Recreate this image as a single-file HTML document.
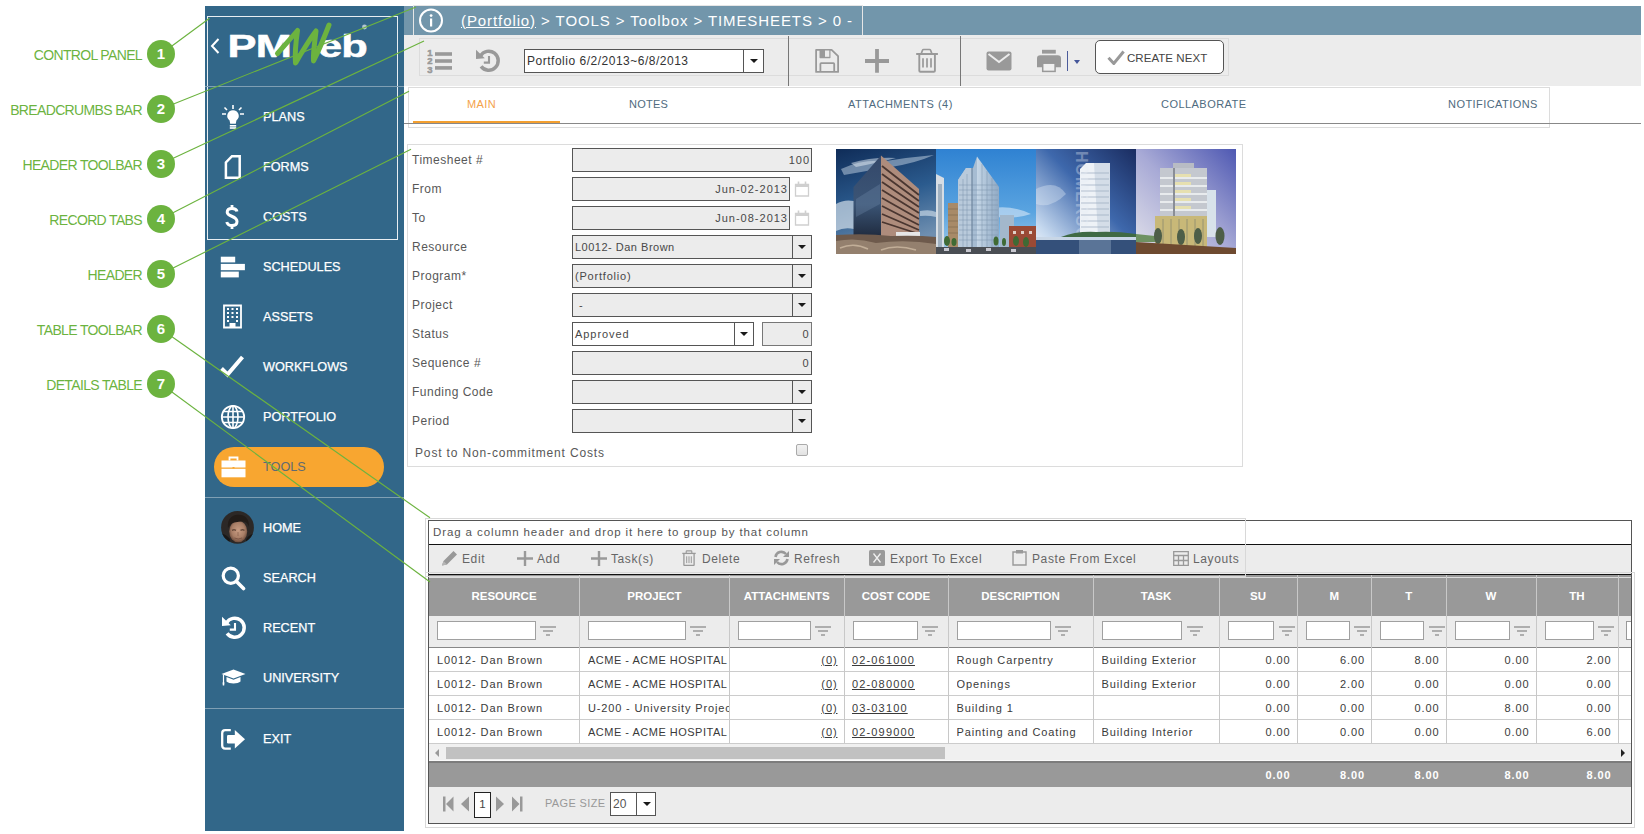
<!DOCTYPE html>
<html><head><meta charset="utf-8">
<style>
*{margin:0;padding:0;box-sizing:border-box}
html,body{width:1644px;height:834px;overflow:hidden;background:#fff;font-family:"Liberation Sans",sans-serif;position:relative}
.a{position:absolute}
.ann{position:absolute;color:#6cb33f;font-size:14px;letter-spacing:-0.65px;text-align:right;white-space:nowrap}
.num{position:absolute;width:28px;height:28px;border-radius:50%;background:#6cb33f;color:#fff;font-size:15px;font-weight:bold;text-align:center;line-height:28px}
#sb{position:absolute;left:205px;top:6px;width:199px;height:825px;background:#326789}
.mi{position:absolute;left:58px;color:#fff;font-size:12.7px;white-space:nowrap;-webkit-text-stroke:0.25px #fff;padding-top:0.5px}
.ic{position:absolute}
.hr{position:absolute;left:0;width:199px;height:1px;background:#7f9fb4}
.lbl{position:absolute;left:412px;font-size:12px;color:#585858;letter-spacing:0.5px;white-space:nowrap}
.fld{position:absolute;left:572px;height:24px;border:1px solid #555;background:#ececec;font-size:11px;color:#484848;letter-spacing:0.5px;white-space:nowrap;line-height:22px}
.dd{position:absolute;right:0;top:0;width:19.5px;height:22px;border-left:1px solid #555}
.dd:after{content:"";position:absolute;left:5.5px;top:9px;border-left:4px solid transparent;border-right:4px solid transparent;border-top:4.5px solid #1a1a1a}
.th{position:absolute;top:577px;height:39px;color:#fff;font-weight:bold;font-size:11.5px;text-align:center;line-height:39px;white-space:nowrap}
.tbt{top:552px;font-size:12px;color:#666;letter-spacing:0.6px;white-space:nowrap}
.td{position:absolute;font-size:11px;color:#3a3a3a;white-space:nowrap;letter-spacing:0.9px;line-height:24px;height:24px;overflow:hidden;padding-top:1px}
</style></head><body>

<!-- annotations -->
<div class="ann" style="right:1502px;top:47px">CONTROL PANEL</div>
<div class="ann" style="right:1502px;top:102px">BREADCRUMBS BAR</div>
<div class="ann" style="right:1502px;top:157px">HEADER TOOLBAR</div>
<div class="ann" style="right:1502px;top:212px">RECORD TABS</div>
<div class="ann" style="right:1502px;top:267px">HEADER</div>
<div class="ann" style="right:1502px;top:322px">TABLE TOOLBAR</div>
<div class="ann" style="right:1502px;top:377px">DETAILS TABLE</div>
<div class="num" style="left:147px;top:40px">1</div>
<div class="num" style="left:147px;top:95px">2</div>
<div class="num" style="left:147px;top:150px">3</div>
<div class="num" style="left:147px;top:205px">4</div>
<div class="num" style="left:147px;top:260px">5</div>
<div class="num" style="left:147px;top:315px">6</div>
<div class="num" style="left:147px;top:370px">7</div>

<!-- sidebar -->
<div id="sb">
 <div class="a" style="left:2px;top:10px;width:191px;height:224px;border:1px solid #e8eef2"></div>
 <svg class="a" style="left:0;top:0" width="199" height="80" viewBox="0 0 199 80">
  <path d="M13.5 33 L7 40 L13.5 47" stroke="#fff" stroke-width="2" fill="none"/>
  <text x="0" y="0" transform="translate(22.5 50.8) scale(1.4 1)" font-family="Liberation Sans" font-weight="bold" font-size="31" fill="#fff" stroke="#fff" stroke-width="0.5" letter-spacing="-0.5">PM</text>
  <text x="0" y="0" transform="translate(113 50.8) scale(1.4 1)" font-family="Liberation Sans" font-weight="bold" font-size="31" fill="#fff" stroke="#fff" stroke-width="0.5" letter-spacing="-0.6">eb</text>
  <path d="M72.5 47.5 C79 40 87 31 92.5 24.5 C91 35 89.5 46 90.5 57 C97 46 104 34 111 25 C110 35 108 45 108.5 55 C114 44 119 32 124 19" stroke="#6cb33f" stroke-width="5" fill="none" stroke-linecap="round" stroke-linejoin="round"/><circle cx="159.5" cy="21" r="2.4" fill="#b5c6d2"/>
  
 </svg>
 <div class="hr" style="top:80px"></div>
 <!-- plans bulb -->
 <svg class="ic" style="left:16px;top:99px" width="24" height="26" viewBox="0 0 24 26">
  <path d="M12 0v4M1 9h4M19 9h4M3.5 2.5l2.5 2.5M20.5 2.5l-2.5 2.5" stroke="#fff" stroke-width="1.6"/>
  <path d="M12 5.2a5.7 5.7 0 0 0-3.4 10.3l0.6 3.3h5.6l0.6-3.3A5.7 5.7 0 0 0 12 5.2z" fill="#fff"/>
  <rect x="8.8" y="20" width="6.4" height="1.6" fill="#fff"/><rect x="8.8" y="22.2" width="6.4" height="1.6" fill="#fff"/>
 </svg>
 <div class="mi" style="top:103px">PLANS</div>
 <!-- forms -->
 <svg class="ic" style="left:19px;top:149px" width="19" height="25" viewBox="0 0 19 25">
  <path d="M8 1.2H15.7V22.8H1.9V7.5Z" stroke="#fff" stroke-width="2.5" fill="none" stroke-linejoin="miter"/>
 </svg>
 <div class="mi" style="top:153px">FORMS</div>
 <!-- costs -->
 <svg class="ic" style="left:20px;top:198px" width="14" height="26" viewBox="0 0 14 26">
  <path d="M12 7.5C11.5 5.5 9.5 4.5 7 4.5C4 4.5 2.2 6 2.2 8.2C2.2 13 12 11.5 12 17.5C12 20 10 21.5 7 21.5C4.2 21.5 2.3 20.3 1.8 18" stroke="#fff" stroke-width="3" fill="none"/>
  <path d="M7 1v3.5M7 21.5V25" stroke="#fff" stroke-width="2.8"/>
 </svg>
 <div class="mi" style="top:203px">COSTS</div>
 <!-- schedules -->
 <svg class="ic" style="left:15px;top:250px" width="26" height="22" viewBox="0 0 26 22">
  <rect x="0.8" y="0.7" width="14.4" height="5.7" fill="#fff"/>
  <rect x="0.8" y="7.9" width="24.1" height="6.3" fill="#fff"/>
  <rect x="0.8" y="15.6" width="18" height="5.8" fill="#fff"/>
 </svg>
 <div class="mi" style="top:253px">SCHEDULES</div>
 <!-- assets -->
 <svg class="ic" style="left:17px;top:298px" width="21" height="25" viewBox="0 0 21 25">
  <path d="M2 1.5H19V23.5H2Z" stroke="#fff" stroke-width="1.8" fill="none"/>
  <g fill="#fff">
   <rect x="5" y="4" width="2" height="2"/><rect x="9.5" y="4" width="2" height="2"/><rect x="14" y="4" width="2" height="2"/>
   <rect x="5" y="8" width="2" height="2"/><rect x="9.5" y="8" width="2" height="2"/><rect x="14" y="8" width="2" height="2"/>
   <rect x="5" y="12" width="2" height="2"/><rect x="9.5" y="12" width="2" height="2"/><rect x="14" y="12" width="2" height="2"/>
   <rect x="5" y="16" width="2" height="2"/><rect x="14" y="16" width="2" height="2"/>
   <rect x="7.5" y="19" width="6" height="4.5"/>
  </g>
 </svg>
 <div class="mi" style="top:303px">ASSETS</div>
 <!-- workflows -->
 <svg class="ic" style="left:15px;top:349px" width="25" height="23" viewBox="0 0 25 23">
  <path d="M1.5 13.5L7.5 19.5L22.5 2" stroke="#fff" stroke-width="4" fill="none"/>
 </svg>
 <div class="mi" style="top:353px">WORKFLOWS</div>
 <!-- portfolio globe -->
 <svg class="ic" style="left:15px;top:398px" width="26" height="26" viewBox="0 0 26 26">
  <circle cx="13" cy="13" r="11.2" stroke="#fff" stroke-width="1.8" fill="none"/>
  <ellipse cx="13" cy="13" rx="5" ry="11.2" stroke="#fff" stroke-width="1.6" fill="none"/>
  <path d="M13 1.8V24.2M2 13H24M3.5 7.5H22.5M3.5 18.5H22.5" stroke="#fff" stroke-width="1.6"/>
 </svg>
 <div class="mi" style="top:403px">PORTFOLIO</div>
 <!-- tools pill -->
 <div class="a" style="left:9px;top:441px;width:170px;height:40px;border-radius:20px;background:#f8a630"></div>
 <svg class="ic" style="left:16px;top:450px" width="25" height="22" viewBox="0 0 25 22">
  <path d="M8.5 4.5V1.5H16.5V4.5" stroke="#fff" stroke-width="1.8" fill="none"/>
  <rect x="0.5" y="4.5" width="24" height="7" fill="#fff"/>
  <rect x="0.5" y="12.8" width="24" height="8.5" fill="#fff"/>
  <rect x="11.5" y="11" width="2" height="1.5" fill="#f8a630"/>
 </svg>
 <div class="mi" style="top:453px;color:#5f6a73;-webkit-text-stroke:0">TOOLS</div>
 <div class="hr" style="top:491px"></div>
 <!-- home avatar -->
 <svg class="ic" style="left:16px;top:505px" width="34" height="34" viewBox="0 0 34 34">
  <defs><clipPath id="avc"><circle cx="16.5" cy="16.4" r="16.4"/></clipPath>
  <radialGradient id="fg" cx="0.5" cy="0.45" r="0.6"><stop offset="0" stop-color="#c89c82"/><stop offset="0.6" stop-color="#a87e66"/><stop offset="1" stop-color="#5e4032"/></radialGradient></defs>
  <g clip-path="url(#avc)">
   <rect width="34" height="34" fill="#2c2826"/>
   <path d="M0 22Q6 24 9 28L8 34H0Z M34 22Q27 24 25 29L26 34H34Z" fill="#191716"/>
   <ellipse cx="17.2" cy="20.5" rx="9" ry="10.8" fill="url(#fg)"/>
   <path d="M7 17C6 9 10 4 17 3.8C24 3.6 28.5 8 28 16C27 12.5 25 10.5 21 10.5C17 10.8 12 11 9.5 13.5C8.5 14.5 7.8 15.8 7 17Z" fill="#221c18"/>
   <path d="M11 19.2Q13 18.2 15 19.2M19.5 19.2Q21.5 18.2 23.5 19.2" stroke="#4a3226" stroke-width="1.1" fill="none"/>
   <path d="M17 21V25" stroke="#8d6652" stroke-width="0.8"/>
   <path d="M13.5 27Q17.2 29 21 27" stroke="#7a5444" stroke-width="0.9" fill="none"/>
  </g>
 </svg>
 <div class="mi" style="top:514px">HOME</div>
 <!-- search -->
 <svg class="ic" style="left:16px;top:560px" width="25" height="25" viewBox="0 0 25 25">
  <circle cx="9.8" cy="9.8" r="7.6" stroke="#fff" stroke-width="3.2" fill="none"/>
  <path d="M15.5 15.5L22.5 22.5" stroke="#fff" stroke-width="3.6" stroke-linecap="round"/>
 </svg>
 <div class="mi" style="top:564px">SEARCH</div>
 <!-- recent -->
 <svg class="ic" style="left:16px;top:609px" width="26" height="26" viewBox="0 0 26 26">
  <path d="M5.47 7.95A9.5 9.5 0 1 1 6.05 18.34" stroke="#fff" stroke-width="3.5" fill="none"/>
  <path d="M1 1.7V10.9L9.8 10.2Z" fill="#fff"/>
  <path d="M14 8.1V15.6M8.8 14.6H15" stroke="#fff" stroke-width="2.1" fill="none"/>
 </svg>
 <div class="mi" style="top:614px">RECENT</div>
 <!-- university -->
 <svg class="ic" style="left:16px;top:663px" width="25" height="18" viewBox="0 0 25 18">
  <path d="M12.5 0.5L24.5 5L12.5 9.5L0.5 5Z" fill="#fff"/>
  <path d="M5.5 8V12.5C8 15 17 15 19.5 12.5V8L12.5 10.8Z" fill="#fff"/>
  <path d="M2.5 5.5V14" stroke="#fff" stroke-width="1.2"/>
  <path d="M1.5 13.5H3.5L3.2 16.5H1.8Z" fill="#fff"/>
 </svg>
 <div class="mi" style="top:664px">UNIVERSITY</div>
 <div class="hr" style="top:702px"></div>
 <!-- exit -->
 <svg class="ic" style="left:16px;top:723px" width="25" height="21" viewBox="0 0 25 21">
  <path d="M9.8 1.2H4.2Q1.2 1.2 1.2 4.2V16.6Q1.2 19.6 4.2 19.6H9.8" stroke="#fff" stroke-width="2.3" fill="none"/>
  <rect x="6" y="6" width="9" height="8.4" rx="1.2" fill="#fff"/>
  <path d="M13.8 1L24 10.3L13.8 19.4Z" fill="#fff"/>
 </svg>
 <div class="mi" style="top:725px">EXIT</div>
</div>

<!-- SIDEBAR_END -->

<!-- breadcrumb -->
<div class="a" style="left:404px;top:6px;width:1237px;height:29px;background:#7296ab"></div>
<div class="a" style="left:413px;top:5px;width:450px;height:31px;border:1px solid #e6e6e6;border-bottom:none"></div>
<svg class="a" style="left:418px;top:8px" width="26" height="26" viewBox="0 0 26 26">
 <circle cx="13" cy="12.5" r="11" stroke="#fff" stroke-width="2" fill="none"/>
 <rect x="12" y="10.5" width="2.2" height="8" fill="#fff"/><circle cx="13.1" cy="7.6" r="1.4" fill="#fff"/>
</svg>
<div class="a" style="left:461px;top:11.5px;font-size:15px;color:#fff;white-space:nowrap;letter-spacing:0.91px"><span style="text-decoration:underline">(Portfolio)</span> &gt; TOOLS &gt; Toolbox &gt; TIMESHEETS &gt; 0 -</div>
<!-- header toolbar -->
<div class="a" style="left:404px;top:35px;width:1237px;height:51px;background:#ececec"></div>
<div class="a" style="left:419px;top:38px;width:810px;height:38px;border:1px solid #dcdcdc"></div>
<div class="a" style="left:788px;top:36px;width:1px;height:50px;background:#777"></div>
<div class="a" style="left:960px;top:36px;width:1px;height:50px;background:#777"></div>
<!-- numbered list icon -->
<svg class="a" style="left:427px;top:48px" width="26" height="26" viewBox="0 0 26 26">
 <g fill="#999" stroke="#999" stroke-width="0.5" style="font-family:'Liberation Sans';font-weight:bold;font-size:9.5px"><text x="0.3" y="7.8">1</text><text x="0.3" y="16.2">2</text><text x="0.3" y="24.7">3</text></g>
 <rect x="8" y="4.2" width="17" height="3.6" fill="#999"/><rect x="8" y="11.2" width="17" height="3.6" fill="#999"/><rect x="8" y="18.1" width="17" height="3.6" fill="#999"/>
</svg>
<!-- history icon -->
<svg class="a" style="left:475px;top:48px" width="26" height="26" viewBox="0 0 26 26">
 <path d="M5.47 7.95A9.5 9.5 0 1 1 6.05 18.34" stroke="#999" stroke-width="3.5" fill="none"/>
 <path d="M1 1.7V10.9L9.8 10.2Z" fill="#999"/>
 <path d="M14 8.1V15.6M8.8 14.6H15" stroke="#999" stroke-width="2.1" fill="none"/>
</svg>
<!-- dropdown -->
<div class="a" style="left:524px;top:49px;width:240px;height:24px;background:#fff;border:1px solid #555;font-size:12px;color:#333;line-height:22px;padding-left:2px;letter-spacing:0.51px;white-space:nowrap">Portfolio 6/2/2013~6/8/2013<div class="dd" style="width:20px"></div></div>
<!-- save -->
<svg class="a" style="left:814px;top:48px" width="26" height="26" viewBox="0 0 26 26">
 <path d="M2.1 1.9H17.6L24.1 8.2V23.9H2.1Z" stroke="#999" stroke-width="1.8" fill="none" stroke-linejoin="round"/>
 <path d="M5.5 1.5H16.5V9.5Q16.5 10.2 15.8 10.2H6.2Q5.5 10.2 5.5 9.5Z" fill="#999"/>
 <rect x="11" y="2.5" width="4.3" height="6.3" fill="#ececec"/>
 <path d="M6.4 24V16Q6.4 15.2 7.2 15.2H19.4Q20.2 15.2 20.2 16V24" stroke="#999" stroke-width="1.8" fill="none"/>
</svg>
<!-- plus -->
<svg class="a" style="left:864px;top:48px" width="26" height="26" viewBox="0 0 26 26">
 <path d="M13 1V24.8M1 13H25" stroke="#999" stroke-width="3.8"/>
</svg>
<!-- trash -->
<svg class="a" style="left:915px;top:48px" width="24" height="26" viewBox="0 0 24 26">
 <path d="M1.2 6H22.9" stroke="#999" stroke-width="2"/>
 <path d="M6.3 5.5L7.5 2.3Q7.8 1.5 8.6 1.5H14.5Q15.3 1.5 15.6 2.3L16.8 5.5" stroke="#999" stroke-width="1.7" fill="none"/>
 <path d="M4.3 6.5V22.7Q4.3 23.8 5.4 23.8H18.8Q19.9 23.8 19.9 22.7V6.5" stroke="#999" stroke-width="1.9" fill="none"/>
 <path d="M8 10.2V19.6M12 10.2V19.6M16 10.2V19.6" stroke="#999" stroke-width="1.7"/>
</svg>
<!-- mail -->
<svg class="a" style="left:986px;top:51px" width="26" height="20" viewBox="0 0 26 20">
 <rect x="0.5" y="0.5" width="25" height="19" rx="2" fill="#999"/>
 <path d="M2.5 3L13 11L23.5 3" stroke="#ececec" stroke-width="2" fill="none"/>
</svg>
<!-- printer -->
<svg class="a" style="left:1036px;top:49px" width="26" height="24" viewBox="0 0 26 24">
 <rect x="6" y="0.8" width="13.8" height="3.8" fill="#999"/>
 <path d="M1 9.5Q1 6.2 4.3 6.2H21.7Q25 6.2 25 9.5V18.3H1Z" fill="#999"/>
 <rect x="6.7" y="14.2" width="12.4" height="8.2" fill="#f0f0f0" stroke="#999" stroke-width="1.5"/>
</svg>
<div class="a" style="left:1067px;top:51px;width:1px;height:20px;background:#4b5b9b"></div>
<div class="a" style="left:1074px;top:60px;width:0;height:0;border-left:3.6px solid transparent;border-right:3.6px solid transparent;border-top:4px solid #44569a"></div>
<!-- create next -->
<div class="a" style="left:1095px;top:40px;width:129px;height:34px;border:1px solid #555;border-radius:5px;background:#fff"></div>
<svg class="a" style="left:1107px;top:50px" width="18" height="15" viewBox="0 0 18 15">
 <path d="M1.5 7.8L6.8 13.5L16.6 1.5" stroke="#999" stroke-width="3" fill="none"/>
</svg>
<div class="a" style="left:1127px;top:52px;font-size:11.5px;color:#444;letter-spacing:0.05px;white-space:nowrap">CREATE NEXT</div>

<!-- tabs -->
<div class="a" style="left:408px;top:87px;width:1142px;height:41px;border:1px solid #dcdcdc"></div>
<div class="a" style="left:404px;top:123px;width:1237px;height:1px;background:#888"></div>
<div class="a" style="left:413px;top:121px;width:147px;height:2px;background:#f4a030"></div>
<div class="a" style="left:467px;top:98px;font-size:11px;color:#f4a24a;letter-spacing:0.4px;white-space:nowrap">MAIN</div>
<div class="a" style="left:629px;top:98px;font-size:11px;color:#4f6b80;letter-spacing:0.25px;white-space:nowrap">NOTES</div>
<div class="a" style="left:848px;top:98px;font-size:11px;color:#4f6b80;letter-spacing:0.5px;white-space:nowrap">ATTACHMENTS (4)</div>
<div class="a" style="left:1161px;top:98px;font-size:11px;color:#4f6b80;letter-spacing:0.46px;white-space:nowrap">COLLABORATE</div>
<div class="a" style="left:1448px;top:98px;font-size:11px;color:#4f6b80;letter-spacing:0.44px;white-space:nowrap">NOTIFICATIONS</div>
<!-- HEADER_END -->

<!-- header form -->
<div class="a" style="left:407px;top:144px;width:836px;height:323px;border:1px solid #dcdcdc"></div>
<div class="lbl" style="top:153px">Timesheet #</div>
<div class="lbl" style="top:182px">From</div>
<div class="lbl" style="top:211px">To</div>
<div class="lbl" style="top:240px">Resource</div>
<div class="lbl" style="top:269px">Program*</div>
<div class="lbl" style="top:298px">Project</div>
<div class="lbl" style="top:327px">Status</div>
<div class="lbl" style="top:356px">Sequence #</div>
<div class="lbl" style="top:385px">Funding Code</div>
<div class="lbl" style="top:414px">Period</div>
<div class="lbl" style="top:446px;left:415px;letter-spacing:0.85px">Post to Non-commitment Costs</div>
<div class="fld" style="top:148px;width:240px;text-align:right;padding-right:1px;letter-spacing:1.0px">100</div>
<div class="fld" style="top:177px;width:218px;text-align:right;padding-right:1px;letter-spacing:1.0px">Jun-02-2013</div>
<div class="fld" style="top:206px;width:218px;text-align:right;padding-right:1px;letter-spacing:1.0px">Jun-08-2013</div>
<svg class="a" style="left:794px;top:181px" width="16" height="16" viewBox="0 0 16 16"><path d="M1.5 3.5H14.5V15H1.5Z" stroke="#cfcfcf" stroke-width="1.3" fill="#fff"/><path d="M1.5 4H14.5V6H1.5Z" fill="#cfcfcf"/><path d="M4.5 0.5V4.5M11.5 0.5V4.5" stroke="#cfcfcf" stroke-width="1.6"/></svg>
<svg class="a" style="left:794px;top:210px" width="16" height="16" viewBox="0 0 16 16"><path d="M1.5 3.5H14.5V15H1.5Z" stroke="#cfcfcf" stroke-width="1.3" fill="#fff"/><path d="M1.5 4H14.5V6H1.5Z" fill="#cfcfcf"/><path d="M4.5 0.5V4.5M11.5 0.5V4.5" stroke="#cfcfcf" stroke-width="1.6"/></svg>
<div class="fld" style="top:235px;width:240px;padding-left:2px">L0012- Dan Brown<div class="dd"></div></div>
<div class="fld" style="top:264px;width:240px;padding-left:2px;letter-spacing:0.8px">(Portfolio)<div class="dd"></div></div>
<div class="fld" style="top:293px;width:240px;padding-left:6px">-<div class="dd"></div></div>
<div class="fld" style="top:322px;width:182px;padding-left:2px;background:#fff;letter-spacing:0.95px">Approved<div class="dd"></div></div>
<div class="fld" style="top:322px;left:762px;width:50px;text-align:right;padding-right:2px;border-color:#777">0</div>
<div class="fld" style="top:351px;width:240px;text-align:right;padding-right:2px">0</div>
<div class="fld" style="top:380px;width:240px"><div class="dd"></div></div>
<div class="fld" style="top:409px;width:240px"><div class="dd"></div></div>
<div class="a" style="left:796px;top:444px;width:12px;height:12px;border:1px solid #aaa;border-radius:2px;background:linear-gradient(#f2f2f2,#e2e2e2)"></div>
<!-- building images -->
<svg class="a" style="left:836px;top:149px" width="400" height="105" viewBox="0 0 400 105">
 <defs>
  <linearGradient id="g1" x1="0" y1="0" x2="0.3" y2="1"><stop offset="0" stop-color="#0f2c58"/><stop offset="0.55" stop-color="#2b5b8e"/><stop offset="1" stop-color="#6f8fb0"/></linearGradient>
  <linearGradient id="g2" x1="0" y1="0" x2="0" y2="1"><stop offset="0" stop-color="#2f82d2"/><stop offset="0.6" stop-color="#5aa4e0"/><stop offset="1" stop-color="#a6cdea"/></linearGradient>
  <linearGradient id="g3" x1="1" y1="0" x2="0" y2="1"><stop offset="0" stop-color="#1a2c60"/><stop offset="0.45" stop-color="#3e68ac"/><stop offset="0.85" stop-color="#c6d9ef"/><stop offset="1" stop-color="#f2f6fb"/></linearGradient>
  <linearGradient id="g4" x1="0" y1="1" x2="1" y2="0"><stop offset="0" stop-color="#e2e2ea"/><stop offset="0.5" stop-color="#a8aad6"/><stop offset="1" stop-color="#4e58b2"/></linearGradient>
  <linearGradient id="gl1" x1="0" y1="0" x2="0" y2="1"><stop offset="0" stop-color="#34486a"/><stop offset="0.6" stop-color="#3b5576"/><stop offset="1" stop-color="#202c40"/></linearGradient>
  <linearGradient id="gl2" x1="0" y1="0" x2="1" y2="0"><stop offset="0" stop-color="#c5d6e6"/><stop offset="1" stop-color="#8fa9c4"/></linearGradient>
 </defs>
 <!-- img1 -->
 <rect x="0" y="0" width="100" height="105" fill="url(#g1)"/>
 <path d="M5 20Q25 10 50 12Q75 8 98 6Q80 14 55 18Q30 22 8 26Z" fill="#c6d5e6" opacity="0.5"/>
 <path d="M15 14Q35 8 60 9Q45 13 20 18Z" fill="#e6eef6" opacity="0.5"/>
 <path d="M0 55Q8 50 18 52V80Q8 78 0 82Z" fill="#dfe8f0" opacity="0.65"/>
 <path d="M84 62Q94 60 100 63V68Q92 66 84 67Z" fill="#d9e4ee" opacity="0.6"/>
 <path d="M17.5 38L45 6.5V87H17.5Z" fill="url(#gl1)"/>
 <path d="M20 50L44 35V55L20 68Z" fill="#6d86a6" opacity="0.35"/>
 <path d="M45 6.5L83 40V87H45Z" fill="#ae8c7c"/>
 <g stroke="#4a3630" stroke-width="1.8"><path d="M46 17L83 46M46 25L83 52M46 33L83 58M46 41L83 64M46 49L83 70M46 57L83 76M46 65L83 81M46 73L83 85"/></g>
 <rect x="60" y="83" width="24" height="7" fill="#e6e6e6"/>
 <path d="M0 86Q30 84 55 87Q80 86 100 88V105H0Z" fill="#6e5a4c"/>
 <path d="M0 92Q20 88 40 94Q70 90 100 95V105H0Z" fill="#94806e"/>
 <path d="M4 99Q18 93 32 100M45 101Q60 95 80 101" stroke="#c2ae98" stroke-width="1.5" fill="none"/>
 <!-- img2 -->
 <rect x="100" y="0" width="100" height="105" fill="url(#g2)"/>
 <path d="M150 60Q175 55 195 65Q180 70 160 68Z" fill="#d8e8f6" opacity="0.6"/>
 <path d="M100 25L108 29V105H100Z" fill="#d6dde4"/>
 <rect x="102" y="35" width="4" height="70" fill="#9fb0c0"/>
 <rect x="112" y="54" width="10" height="44" fill="#a88a68"/>
 <g stroke="#7b654a" stroke-width="0.6"><path d="M112 60H122M112 66H122M112 72H122M112 78H122M112 84H122"/></g>
 <path d="M122 31L130 19H137L141 7.5V98H122Z" fill="#a6bcd2"/>
 <path d="M141 7.5L163 38V98H141Z" fill="url(#gl2)"/>
 <path d="M122 31L130 19H136V98H122Z" fill="#b9cadb"/>
 <g stroke="#7a92aa" stroke-width="0.5"><path d="M123 36H162M123 41H162M123 46H162M123 51H162M123 56H162M123 61H162M123 66H162M123 71H162M123 76H162M123 81H162M123 86H162M123 91H162"/><path d="M127 30V98M131 25V98M146 15V98M151 22V98M156 29V98"/></g>
 <path d="M136 19V98" stroke="#6f869e" stroke-width="1.2"/>
 <path d="M164 66H178V98H164Z" fill="#a3b8cc"/>
 <path d="M173 77H200V100H173Z" fill="#9a4a36"/>
 <g fill="#e0d0c8"><rect x="177" y="82" width="3" height="3"/><rect x="185" y="82" width="3" height="3"/><rect x="193" y="82" width="3" height="3"/></g>
 <g fill="#3f6a34"><ellipse cx="111" cy="92" rx="3" ry="5"/><ellipse cx="118" cy="93" rx="2.5" ry="4"/><ellipse cx="160" cy="92" rx="2.5" ry="4.5"/><ellipse cx="168" cy="93" rx="2" ry="4"/><ellipse cx="180" cy="92" rx="3" ry="5"/><ellipse cx="190" cy="93" rx="3" ry="5"/></g>
 <rect x="100" y="98" width="100" height="7" fill="#4a4e54"/>
 <g fill="#c8c8d0"><rect x="108" y="99" width="5" height="3"/><rect x="130" y="100" width="5" height="3"/><rect x="150" y="99" width="5" height="3"/><rect x="175" y="100" width="5" height="3"/></g>
 <!-- img3 -->
 <rect x="200" y="0" width="100" height="105" fill="url(#g3)"/>
 <path d="M200 40Q220 30 230 45Q215 60 200 55Z" fill="#e8f0f8" opacity="0.35"/>
 
 <path d="M244 20L250 14H274V87H244Z" fill="#eef2f7"/>
 <path d="M258 14H274V87H262Z" fill="#d4dde8"/>
 <g stroke="#9aaabd" stroke-width="0.7"><path d="M245 24H273M245 30H273M245 36H273M245 42H273M245 48H273M245 54H273M245 60H273M245 66H273M245 72H273M245 78H273"/></g>
 <g transform="translate(240 2) rotate(90)" opacity="0.35"><text x="0" y="0" font-family="Liberation Sans" font-weight="bold" font-size="16" fill="#e8eef6" letter-spacing="1">HOMERSONIC</text></g>
 <path d="M225 88Q240 82 260 83Q280 82 300 85V89H225Z" fill="#3f6a44"/>
 <rect x="200" y="88" width="100" height="17" fill="#34507a"/>
 <rect x="200" y="88" width="100" height="3" fill="#c8d6e6"/>
 <rect x="243" y="91" width="32" height="14" fill="#8aa0ba" opacity="0.45"/>
 <!-- img4 -->
 <rect x="300" y="0" width="100" height="105" fill="url(#g4)"/>
 <rect x="337" y="14" width="21" height="6" fill="#b8bcc4"/>
 <rect x="324" y="19" width="47" height="48" fill="#c4c8cf"/>
 <g fill="#e6e0b0"><rect x="339" y="25" width="16" height="3"/><rect x="339" y="33" width="16" height="3"/><rect x="339" y="41" width="16" height="3"/><rect x="339" y="49" width="16" height="3"/><rect x="339" y="57" width="16" height="3"/></g>
 <g stroke="#f4f6f8" stroke-width="1.4"><path d="M324 29H371M324 37H371M324 45H371M324 53H371M324 61H371"/></g>
 <rect x="337" y="19" width="2" height="48" fill="#8a8e96"/>
 <rect x="371" y="41" width="9" height="47" fill="#d8e2ea"/>
 <rect x="319" y="67" width="52" height="31" fill="#c8b878"/>
 <g stroke="#8c8a70" stroke-width="0.8"><path d="M327 70V98M335 70V98M343 70V98M351 70V98M359 70V98M367 70V98"/></g>
 <path d="M300 85L319 87V93H300Z" fill="#6e9262"/>
 <g fill="#4d5e48"><ellipse cx="322" cy="87" rx="4" ry="8"/><ellipse cx="345" cy="88" rx="4" ry="8"/><ellipse cx="362" cy="87" rx="4" ry="8"/><ellipse cx="384" cy="87" rx="4.5" ry="9"/></g>
 <path d="M300 93L400 99V105H300Z" fill="#6e4a30"/>
</svg>
<!-- table -->
<div class="a" style="left:428px;top:520px;width:1204px;height:304px;border:1px solid #555;background:#ececec"></div>
<div class="a" style="left:429px;top:521px;width:1202px;height:24px;background:#fff;border-bottom:1px solid #111"></div>
<div class="a" style="left:433px;top:526px;font-size:11.5px;color:#555;letter-spacing:0.9px;white-space:nowrap">Drag a column header and drop it here to group by that column</div>
<div class="a" style="left:429px;top:574px;width:1202px;height:1px;background:#111"></div>

<!-- table toolbar -->
<svg class="a" style="left:441px;top:550px" width="17" height="16" viewBox="0 0 17 16"><path d="M1 15.5L2.5 11L12.5 1L16 4.5L6 14.5Z" fill="#999"/><path d="M1 15.5L2.5 11L6 14.5Z" fill="#b5b5b5"/></svg>
<div class="a tbt" style="left:462px">Edit</div>
<svg class="a" style="left:517px;top:551px" width="16" height="15" viewBox="0 0 16 15"><path d="M8 0V15M0 7.5H16" stroke="#999" stroke-width="2.4"/></svg>
<div class="a tbt" style="left:537px">Add</div>
<svg class="a" style="left:591px;top:551px" width="16" height="15" viewBox="0 0 16 15"><path d="M8 0V15M0 7.5H16" stroke="#999" stroke-width="2.4"/></svg>
<div class="a tbt" style="left:611px">Task(s)</div>
<svg class="a" style="left:682px;top:550px" width="14" height="16" viewBox="0 0 14 16"><path d="M0.3 3.4H13.7" stroke="#999" stroke-width="1.3"/><path d="M4.2 3V1.6Q4.2 0.9 4.9 0.9H9.1Q9.8 0.9 9.8 1.6V3" stroke="#999" stroke-width="1.1" fill="none"/><path d="M1.9 3.8V14.8Q1.9 15.5 2.6 15.5H11.4Q12.1 15.5 12.1 14.8V3.8" stroke="#999" stroke-width="1.3" fill="none"/><path d="M4.7 6.3V13.1M7 6.3V13.1M9.3 6.3V13.1" stroke="#999" stroke-width="1"/></svg>
<div class="a tbt" style="left:702px">Delete</div>
<svg class="a" style="left:773px;top:550px" width="17" height="16" viewBox="0 0 17 16"><path d="M2.5 7A6 6 0 0 1 13 4" stroke="#999" stroke-width="2.6" fill="none"/><path d="M16 1V7H10Z" fill="#999"/><path d="M14.5 9A6 6 0 0 1 4 12" stroke="#999" stroke-width="2.6" fill="none"/><path d="M1 15V9H7Z" fill="#999"/></svg>
<div class="a tbt" style="left:794px">Refresh</div>
<svg class="a" style="left:869px;top:550px" width="16" height="16" viewBox="0 0 16 16"><rect x="0" y="0" width="16" height="16" rx="1.5" fill="#999"/><path d="M4.5 3.5L11.5 12.5M11.5 3.5L4.5 12.5" stroke="#f0f0f0" stroke-width="1.3"/></svg>
<div class="a tbt" style="left:890px">Export To Excel</div>
<svg class="a" style="left:1012px;top:549px" width="15" height="17" viewBox="0 0 15 17"><path d="M1 3H14V16H1Z" stroke="#999" stroke-width="1.4" fill="none"/><rect x="4" y="1" width="7" height="3.5" fill="#999"/></svg>
<div class="a tbt" style="left:1032px">Paste From Excel</div>
<svg class="a" style="left:1173px;top:551px" width="16" height="15" viewBox="0 0 16 15"><path d="M0.7 0.7H15.3V14.3H0.7Z M0.7 4.5H15.3M0.7 9.5H15.3M5.5 4.5V14.3M10.5 4.5V14.3" stroke="#999" stroke-width="1.3" fill="none"/></svg>
<div class="a tbt" style="left:1193px">Layouts</div>
<div class="a" style="left:429px;top:575px;width:1202px;height:41px;background:#999"></div><div class="a" style="left:429px;top:577px;width:1202px;height:1px;background:#dcdcdc"></div>
<div class="a" style="left:429px;top:616px;width:1202px;height:32px;background:#ececec;border-bottom:1.5px solid #888"></div>
<div class="a" style="left:429px;top:648px;width:1202px;height:95px;background:#fff"></div>
<div class="a" style="left:429px;top:670.5px;width:1202px;height:1px;background:#ccc"></div>
<div class="a" style="left:429px;top:694.5px;width:1202px;height:1px;background:#ccc"></div>
<div class="a" style="left:429px;top:718.5px;width:1202px;height:1px;background:#ccc"></div>
<div class="a" style="left:429px;top:743px;width:1202px;height:1px;background:#ccc"></div>
<div class="a" style="left:579.0px;top:575px;width:1px;height:168px;background:#c8c8c8"></div>
<div class="a" style="left:729.0px;top:575px;width:1px;height:168px;background:#c8c8c8"></div>
<div class="a" style="left:843.5px;top:575px;width:1px;height:168px;background:#c8c8c8"></div>
<div class="a" style="left:947.5px;top:575px;width:1px;height:168px;background:#c8c8c8"></div>
<div class="a" style="left:1092.5px;top:575px;width:1px;height:168px;background:#c8c8c8"></div>
<div class="a" style="left:1218.5px;top:575px;width:1px;height:168px;background:#c8c8c8"></div>
<div class="a" style="left:1296.5px;top:575px;width:1px;height:168px;background:#c8c8c8"></div>
<div class="a" style="left:1371.0px;top:575px;width:1px;height:168px;background:#c8c8c8"></div>
<div class="a" style="left:1445.5px;top:575px;width:1px;height:168px;background:#c8c8c8"></div>
<div class="a" style="left:1535.5px;top:575px;width:1px;height:168px;background:#c8c8c8"></div>
<div class="a" style="left:1617.5px;top:575px;width:1px;height:168px;background:#c8c8c8"></div>
<div class="th" style="left:428.5px;width:151.0px">RESOURCE</div>
<div class="th" style="left:579.5px;width:150.0px">PROJECT</div>
<div class="th" style="left:729.5px;width:114.5px">ATTACHMENTS</div>
<div class="th" style="left:844px;width:104px">COST CODE</div>
<div class="th" style="left:948px;width:145px">DESCRIPTION</div>
<div class="th" style="left:1093px;width:126px">TASK</div>
<div class="th" style="left:1219px;width:78px">SU</div>
<div class="th" style="left:1297px;width:74.5px">M</div>
<div class="th" style="left:1371.5px;width:74.5px">T</div>
<div class="th" style="left:1446px;width:90px">W</div>
<div class="th" style="left:1536px;width:82px">TH</div>
<!-- FILTERS -->
<div class="a" style="left:437.0px;top:621px;width:98.5px;height:19px;border:1px solid #a0a0a0;background:#fff"></div>
<svg class="a" style="left:540.0px;top:626px" width="16" height="10" viewBox="0 0 16 10"><path d="M0 1H16M3 5H13M6 9H10" stroke="#999" stroke-width="1.6"/></svg>
<div class="a" style="left:588.0px;top:621px;width:97.8px;height:19px;border:1px solid #a0a0a0;background:#fff"></div>
<svg class="a" style="left:690.3px;top:626px" width="16" height="10" viewBox="0 0 16 10"><path d="M0 1H16M3 5H13M6 9H10" stroke="#999" stroke-width="1.6"/></svg>
<div class="a" style="left:738.0px;top:621px;width:72.5px;height:19px;border:1px solid #a0a0a0;background:#fff"></div>
<svg class="a" style="left:815.0px;top:626px" width="16" height="10" viewBox="0 0 16 10"><path d="M0 1H16M3 5H13M6 9H10" stroke="#999" stroke-width="1.6"/></svg>
<div class="a" style="left:852.5px;top:621px;width:65.0px;height:19px;border:1px solid #a0a0a0;background:#fff"></div>
<svg class="a" style="left:922.0px;top:626px" width="16" height="10" viewBox="0 0 16 10"><path d="M0 1H16M3 5H13M6 9H10" stroke="#999" stroke-width="1.6"/></svg>
<div class="a" style="left:956.5px;top:621px;width:94.2px;height:19px;border:1px solid #a0a0a0;background:#fff"></div>
<svg class="a" style="left:1055.2px;top:626px" width="16" height="10" viewBox="0 0 16 10"><path d="M0 1H16M3 5H13M6 9H10" stroke="#999" stroke-width="1.6"/></svg>
<div class="a" style="left:1101.5px;top:621px;width:80.7px;height:19px;border:1px solid #a0a0a0;background:#fff"></div>
<svg class="a" style="left:1186.7px;top:626px" width="16" height="10" viewBox="0 0 16 10"><path d="M0 1H16M3 5H13M6 9H10" stroke="#999" stroke-width="1.6"/></svg>
<div class="a" style="left:1227.5px;top:621px;width:46.5px;height:19px;border:1px solid #a0a0a0;background:#fff"></div>
<svg class="a" style="left:1278.5px;top:626px" width="16" height="10" viewBox="0 0 16 10"><path d="M0 1H16M3 5H13M6 9H10" stroke="#999" stroke-width="1.6"/></svg>
<div class="a" style="left:1305.5px;top:621px;width:44.0px;height:19px;border:1px solid #a0a0a0;background:#fff"></div>
<svg class="a" style="left:1354.0px;top:626px" width="16" height="10" viewBox="0 0 16 10"><path d="M0 1H16M3 5H13M6 9H10" stroke="#999" stroke-width="1.6"/></svg>
<div class="a" style="left:1380.0px;top:621px;width:44.0px;height:19px;border:1px solid #a0a0a0;background:#fff"></div>
<svg class="a" style="left:1428.5px;top:626px" width="16" height="10" viewBox="0 0 16 10"><path d="M0 1H16M3 5H13M6 9H10" stroke="#999" stroke-width="1.6"/></svg>
<div class="a" style="left:1454.5px;top:621px;width:55.1px;height:19px;border:1px solid #a0a0a0;background:#fff"></div>
<svg class="a" style="left:1514.1px;top:626px" width="16" height="10" viewBox="0 0 16 10"><path d="M0 1H16M3 5H13M6 9H10" stroke="#999" stroke-width="1.6"/></svg>
<div class="a" style="left:1544.5px;top:621px;width:49.4px;height:19px;border:1px solid #a0a0a0;background:#fff"></div>
<svg class="a" style="left:1598.4px;top:626px" width="16" height="10" viewBox="0 0 16 10"><path d="M0 1H16M3 5H13M6 9H10" stroke="#999" stroke-width="1.6"/></svg>
<div class="a" style="left:1626px;top:621px;width:5px;height:19px;border:1px solid #999;background:#fff;border-right:none"></div>
<div class="td" style="left:437.0px;top:647px;width:142.0px">L0012- Dan Brown</div>
<div class="td" style="left:588.0px;top:647px;width:141.0px;letter-spacing:0.5px">ACME - ACME HOSPITAL</div>
<div class="td" style="left:729.5px;top:647px;width:108.0px;text-align:right;text-decoration:underline;">(0)</div>
<div class="td" style="left:852px;top:647px;width:96px;text-decoration:underline;letter-spacing:1.15px">02-061000</div>
<div class="td" style="left:956.5px;top:647px;width:136px">Rough Carpentry</div>
<div class="td" style="left:1101.5px;top:647px;width:117px">Building Exterior</div>
<div class="td" style="left:1219px;top:647px;width:71.5px;text-align:right;">0.00</div>
<div class="td" style="left:1297px;top:647px;width:68.0px;text-align:right;">6.00</div>
<div class="td" style="left:1371.5px;top:647px;width:68.0px;text-align:right;">8.00</div>
<div class="td" style="left:1446px;top:647px;width:83.5px;text-align:right;">0.00</div>
<div class="td" style="left:1536px;top:647px;width:75.5px;text-align:right;">2.00</div>
<div class="td" style="left:437.0px;top:671px;width:142.0px">L0012- Dan Brown</div>
<div class="td" style="left:588.0px;top:671px;width:141.0px;letter-spacing:0.5px">ACME - ACME HOSPITAL</div>
<div class="td" style="left:729.5px;top:671px;width:108.0px;text-align:right;text-decoration:underline;">(0)</div>
<div class="td" style="left:852px;top:671px;width:96px;text-decoration:underline;letter-spacing:1.15px">02-080000</div>
<div class="td" style="left:956.5px;top:671px;width:136px">Openings</div>
<div class="td" style="left:1101.5px;top:671px;width:117px">Building Exterior</div>
<div class="td" style="left:1219px;top:671px;width:71.5px;text-align:right;">0.00</div>
<div class="td" style="left:1297px;top:671px;width:68.0px;text-align:right;">2.00</div>
<div class="td" style="left:1371.5px;top:671px;width:68.0px;text-align:right;">0.00</div>
<div class="td" style="left:1446px;top:671px;width:83.5px;text-align:right;">0.00</div>
<div class="td" style="left:1536px;top:671px;width:75.5px;text-align:right;">0.00</div>
<div class="td" style="left:437.0px;top:695px;width:142.0px">L0012- Dan Brown</div>
<div class="td" style="left:588.0px;top:695px;width:141.0px;letter-spacing:0.85px">U-200 - University Project</div>
<div class="td" style="left:729.5px;top:695px;width:108.0px;text-align:right;text-decoration:underline;">(0)</div>
<div class="td" style="left:852px;top:695px;width:96px;text-decoration:underline;letter-spacing:1.15px">03-03100</div>
<div class="td" style="left:956.5px;top:695px;width:136px">Building 1</div>
<div class="td" style="left:1219px;top:695px;width:71.5px;text-align:right;">0.00</div>
<div class="td" style="left:1297px;top:695px;width:68.0px;text-align:right;">0.00</div>
<div class="td" style="left:1371.5px;top:695px;width:68.0px;text-align:right;">0.00</div>
<div class="td" style="left:1446px;top:695px;width:83.5px;text-align:right;">8.00</div>
<div class="td" style="left:1536px;top:695px;width:75.5px;text-align:right;">0.00</div>
<div class="td" style="left:437.0px;top:719px;width:142.0px">L0012- Dan Brown</div>
<div class="td" style="left:588.0px;top:719px;width:141.0px;letter-spacing:0.5px">ACME - ACME HOSPITAL</div>
<div class="td" style="left:729.5px;top:719px;width:108.0px;text-align:right;text-decoration:underline;">(0)</div>
<div class="td" style="left:852px;top:719px;width:96px;text-decoration:underline;letter-spacing:1.15px">02-099000</div>
<div class="td" style="left:956.5px;top:719px;width:136px">Painting and Coating</div>
<div class="td" style="left:1101.5px;top:719px;width:117px">Building Interior</div>
<div class="td" style="left:1219px;top:719px;width:71.5px;text-align:right;">0.00</div>
<div class="td" style="left:1297px;top:719px;width:68.0px;text-align:right;">0.00</div>
<div class="td" style="left:1371.5px;top:719px;width:68.0px;text-align:right;">0.00</div>
<div class="td" style="left:1446px;top:719px;width:83.5px;text-align:right;">0.00</div>
<div class="td" style="left:1536px;top:719px;width:75.5px;text-align:right;">6.00</div>
<div class="a" style="left:429px;top:744px;width:1202px;height:16px;background:#f0f0f0;border-bottom:none"></div><div class="a" style="left:429px;top:760px;width:1202px;height:1px;background:#fafafa"></div>
<div class="a" style="left:446px;top:746.5px;width:499px;height:12.5px;background:#c1c1c1"></div>
<div class="a" style="left:435px;top:749px;width:0;height:0;border-top:4px solid transparent;border-bottom:4px solid transparent;border-right:4px solid #999"></div>
<div class="a" style="left:1621px;top:748.5px;width:0;height:0;border-top:4.5px solid transparent;border-bottom:4.5px solid transparent;border-left:4.5px solid #222"></div>
<div class="a" style="left:429px;top:761px;width:1202px;height:26px;background:#999;border-top:2px solid #7c7c7c"></div>
<div class="td" style="left:1219px;top:762px;width:71.5px;text-align:right;color:#fff;font-weight:bold;">0.00</div>
<div class="td" style="left:1297px;top:762px;width:68.0px;text-align:right;color:#fff;font-weight:bold;">8.00</div>
<div class="td" style="left:1371.5px;top:762px;width:68.0px;text-align:right;color:#fff;font-weight:bold;">8.00</div>
<div class="td" style="left:1446px;top:762px;width:83.5px;text-align:right;color:#fff;font-weight:bold;">8.00</div>
<div class="td" style="left:1536px;top:762px;width:75.5px;text-align:right;color:#fff;font-weight:bold;">8.00</div>
<svg class="a" style="left:442px;top:796px" width="82" height="16" viewBox="0 0 82 16"><g fill="#999"><rect x="1" y="0.5" width="2.5" height="15"/><path d="M11.5 0.5V15.5L4 8Z"/><path d="M27 0.5V15.5L19 8Z"/><path d="M54 0.5V15.5L62 8Z"/><path d="M70 0.5V15.5L77.5 8Z"/><rect x="78" y="0.5" width="2.5" height="15"/></g></svg>
<div class="a" style="left:474px;top:792px;width:17px;height:26px;border:1px solid #222;background:#fff;font-size:11.5px;color:#444;text-align:center;line-height:23px">1</div>
<div class="a" style="left:545px;top:797px;font-size:11px;color:#999;letter-spacing:0.35px;white-space:nowrap">PAGE SIZE</div>
<div class="a" style="left:610px;top:792px;width:46px;height:24px;border:1px solid #555;background:#fff;font-size:12px;color:#555;line-height:22px;padding-left:2px">20<div class="dd" style="width:19px"></div></div>

<div class="a" style="left:425px;top:518px;width:821px;height:59px;border:1px solid #d8d8d8"></div>
<div class="a" style="left:425px;top:572px;width:1210px;height:256px;border:1px solid #d8d8d8"></div>
<!-- LINES -->
<svg class="a" style="left:0;top:0" width="1644" height="834"><g stroke="#6cb33f" stroke-width="1.15"><line x1="171.9" y1="46.0" x2="209.5" y2="18.3"/><line x1="173.5" y1="104.0" x2="416" y2="7"/><line x1="173.2" y1="158.3" x2="424" y2="41"/><line x1="173.0" y1="212.8" x2="409" y2="91.3"/><line x1="173.1" y1="268.0" x2="411" y2="149.3"/><line x1="172.0" y1="336.8" x2="430" y2="517.8"/><line x1="171.9" y1="392.0" x2="430" y2="582"/></g></svg>

</body></html>
